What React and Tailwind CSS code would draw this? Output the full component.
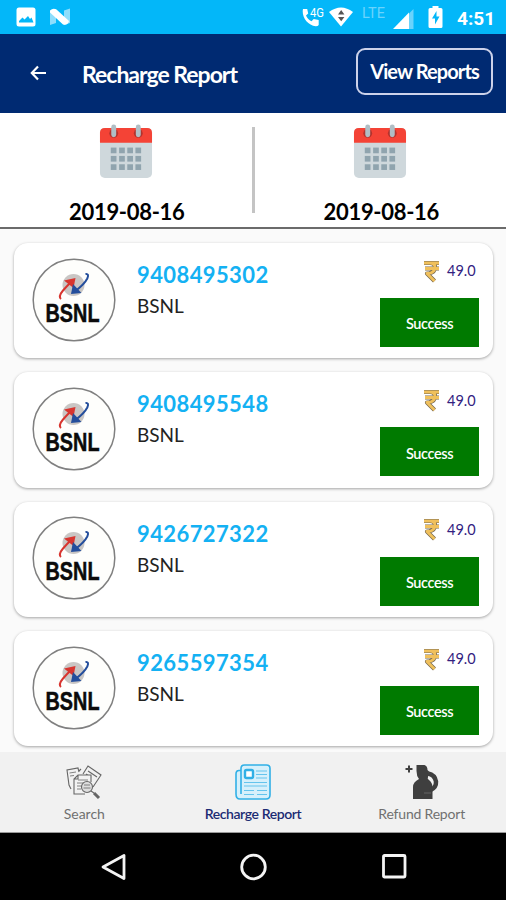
import React from 'react';

const dates = ['2019-08-16', '2019-08-16'];

const recharges = [
  { number: '9408495302', operator: 'BSNL', amount: '49.0', status: 'Success' },
  { number: '9408495548', operator: 'BSNL', amount: '49.0', status: 'Success' },
  { number: '9426727322', operator: 'BSNL', amount: '49.0', status: 'Success' },
  { number: '9265597354', operator: 'BSNL', amount: '49.0', status: 'Success' },
];

function StatusBar() {
  return (
    <div className="flex h-[34px] shrink-0 items-center bg-[#03b7f9] pl-4 pr-3 text-white">
      <svg width="20" height="20" viewBox="0 0 20 20">
        <rect x="0.5" y="0.5" width="19" height="19" rx="2.5" fill="#fff" />
        <path d="M3 15.500 3 14 6.500 10.500l2 2 3.500-3.500 2 3 1.500-1.500 2 5Z" fill="#03b7f9" />
      </svg>
      <svg className="ml-[13px]" width="22" height="18" viewBox="0 0 22 18">
        <path d="M1 3.5 7 1v14l-6 2ZM15 2.500l6-2V15l-6 2Z" fill="#fff" opacity=".55" />
        <path d="M1 2.5Q4-.5 7.500 1.500L20 13q-1 4.500-6 3.500L1 4.500Z" fill="#fff" />
      </svg>
      <div className="grow" />
      <svg width="22" height="20" viewBox="0 0 22 20">
        <path d="M1 2h4.2l1 4.500-2.200 2c1.300 2.800 3 4.400 5.500 5.700l2.200-2.300 5 1.100V18q-1 1.300-3 1.200C6.500 18.500.5 11.500.7 4Z" fill="#fff" />
        <text x="8" y="10" textLength="14" lengthAdjust="spacingAndGlyphs" className="font-['Roboto'] text-[12px]" fill="#fff">4G</text>
      </svg>
      <svg className="ml-[4px]" width="26" height="20" viewBox="0 0 26 20">
        <path d="M1 5Q13-4 25 5L13 19.500Z" fill="#fff" />
        <path d="m10 7.500 3.200-4.500 3.200 4.500ZM10 10h6.400l-3.200 4.300Z" fill="#555" />
      </svg>
      <span className="ml-[8px] mt-[-5px] w-[26px] font-['Roboto'] text-[14.500px] leading-none tracking-[0.1px] text-[#6bd3fc]">LTE</span>
      <svg className="ml-[5px] mt-[4px]" width="21" height="20" viewBox="0 0 21 20">
        <path d="M16 4.500 20.500 0v20H16Z" fill="#6bd3fc" />
        <path d="M0 20 16 3.500V20Z" fill="#fff" />
      </svg>
      <svg className="ml-[14px]" width="15" height="22" viewBox="0 0 15 22">
        <path d="M4.500 2V0h6v2H13q1.500 0 1.500 1.500v17Q14.500 22 13 22H2Q.500 22 .5 20.500v-17Q.5 2 2 2Z" fill="#fff" />
        <path d="M8.500 5 4 12.500h3V18.500L11.500 10.500h-3Z" fill="#03b7f9" />
      </svg>
      <span className="ml-[14px] mt-[3px] w-[37px] whitespace-nowrap font-['Roboto'] text-[19px] font-bold leading-none">4:51</span>
    </div>
  );
}

function Header() {
  return (
    <header className="flex h-[78.500px] shrink-0 items-center bg-[#002a72] text-white">
      <svg className="ml-[30px] mt-[-1px]" width="17" height="16" viewBox="0 0 17 16" fill="none" stroke="#fff" strokeWidth="2.200">
        <path d="M16 8H2M8 1.500 1.800 8 8 14.500" />
      </svg>
      <h1 className="ml-[35px] mt-[2px] whitespace-nowrap text-[23px] font-bold tracking-[-1px]">Recharge Report</h1>
      <button
        type="button"
        className="mb-[4px] ml-auto mr-[13px] h-[47px] w-[137px] whitespace-nowrap rounded-[9px] border-2 border-[#ccd2ea] text-[20px] font-bold tracking-[-0.9px]"
      >
        View Reports
      </button>
    </header>
  );
}

function CalendarIcon() {
  return (
    <svg width="54" height="56" viewBox="0 0 54 56">
      <rect x="0.500" y="4" width="53" height="51" rx="5" fill="#cfd8dc" />
      <path d="M.5 19V9q0-5 5-5h43q5 0 5 5v10Z" fill="#f44336" />
      <circle cx="14.500" cy="9.500" r="4.500" fill="#b3332d" />
      <circle cx="39.500" cy="9.500" r="4.500" fill="#b3332d" />
      <path d="M14.500 3v8M39.500 3v8" stroke="#b0bec5" strokeWidth="5" strokeLinecap="round" />
      {[24, 32.5, 41].map((y) =>
        [11.5, 20, 28.3, 36.6].map((x) => (
          <rect key={`${x}-${y}`} x={x} y={y} width="5.800" height="5.800" fill="#90a4ae" />
        ))
      )}
    </svg>
  );
}

function DateBar() {
  return (
    <div className="flex h-[116.500px] shrink-0 border-b-2 border-[#6b6b6b] bg-white">
      {dates.map((date, i) => (
        <React.Fragment key={i}>
          {i > 0 && <div className="mt-[14.500px] h-[86px] w-[3px] bg-[#c4c4c4]" />}
          <button type="button" className="flex flex-1 flex-col items-center pt-[11.500px]">
            <CalendarIcon />
            <span className="ml-[2px] mt-[18px] whitespace-nowrap text-[22px] font-bold leading-[30px] tracking-[-0.300px] text-black">
              {date}
            </span>
          </button>
        </React.Fragment>
      ))}
    </div>
  );
}

function BsnlLogo() {
  return (
    <svg width="84" height="84" viewBox="0 0 84 84">
      <circle cx="42" cy="42" r="40.800" fill="#fefefc" stroke="#808080" strokeWidth="1.500" />
      <circle cx="41.500" cy="27" r="11" fill="#c9c6c4" />
      <path d="M29 41q-3-2.500 2-8.500 4-4.500 8.500-9" fill="none" stroke="#d8352f" strokeWidth="2" />
      <path d="M32 22.500 43.500 20l-2 10Z" fill="#d8352f" />
      <path d="M53.500 16q4-.5 1.800 4.500Q52.500 26 43.500 33" fill="none" stroke="#244e9c" strokeWidth="2" />
      <path d="m41 26-2 10 10.500-1Z" fill="#244e9c" />
      <text
        x="13.500"
        y="64"
        textLength="54"
        lengthAdjust="spacingAndGlyphs"
        className="font-['Liberation_Sans'] text-[26px] font-bold"
        fill="#0b0b0b"
        stroke="#0b0b0b"
        strokeWidth="0.500"
      >
        BSNL
      </text>
    </svg>
  );
}

function RupeeIcon() {
  return (
    <svg width="17" height="23" viewBox="0 0 17 23" fill="none" strokeLinejoin="round">
      <path d="M1 3h15M2 8.500h14M4 3h3q5 0 5 4.500T6 13.500H4L11.500 21" stroke="#77684f" strokeWidth="4.200" />
      <path d="M1 3h15M2 8.500h14M4 3h3q5 0 5 4.500T6 13.500H4L11.500 21" stroke="#f0c05c" strokeWidth="2.800" />
    </svg>
  );
}

function RechargeCard({ item }) {
  return (
    <article className="flex h-[115.300px] shrink-0 rounded-[14px] bg-white shadow-[0_1px_3px_rgba(0,0,0,0.35)]">
      <div className="ml-[18px] mt-[14.500px]">
        <BsnlLogo />
      </div>
      <div className="ml-[21px] mt-[17px]">
        <h2 className="whitespace-nowrap text-[22px] font-bold leading-[30px] tracking-[0.400px] text-[#14b1f3]">{item.number}</h2>
        <p className="mt-[2px] text-[19px] leading-[28px] text-[#222]">{item.operator}</p>
      </div>
      <div className="ml-auto mr-[14px] mt-[15px] flex flex-col items-end">
        <div className="mr-[3px] flex h-[26px] items-center">
          <RupeeIcon />
          <span className="ml-[7px] w-[29px] whitespace-nowrap text-[14.500px] text-[#32217f]">{item.amount}</span>
        </div>
        <span className="mt-[14px] flex h-[49px] w-[99px] items-center justify-center bg-[#007a00] pt-[3px] text-[14.500px] font-semibold tracking-[-0.4px] text-white">
          {item.status}
        </span>
      </div>
    </article>
  );
}

function SearchDocsIcon() {
  return (
    <svg width="36" height="36" viewBox="0 0 36 36" fill="none" stroke="#666" strokeWidth="1.100">
      <path d="M5 25 3 21 1 6l11-2 1 4M13 7l2-2" />
      <path d="M3.500 9 10 8M4 12l4-.5" strokeWidth=".8" />
      <path d="m17 10 5-8 13 9-8 12M22 7l9 6M20 10l5 3.500" />
      <path d="M19 30H8V15l4-4h13v7M8 15h4v-4" fill="#f2f2f2" />
      <path d="M12 16h10M11 19h7M11 22h5M11 25h4" strokeWidth=".8" />
      <circle cx="21" cy="23" r="5.500" fill="#dedede" />
      <path d="M18 21h6M17.500 24h7" strokeWidth=".8" />
      <path d="m25 27 3 2" />
      <path d="m28 29 5 5" strokeWidth="3" />
    </svg>
  );
}

function NewsIcon() {
  return (
    <svg width="36" height="36" viewBox="0 0 36 36" fill="none" stroke="#31b0e6" strokeWidth="1.600">
      <path d="M6 6.500H4Q1 6.500 1 10v20q0 5 4 5h26q4 0 4-4V4.500Q35 1 31.500 1h-22Q6 1 6 4.500V30" fill="#d6f0fb" />
      <rect x="10" y="6" width="8" height="8" rx="1.500" fill="#fff" strokeWidth="2.400" />
      <path d="M21 7h11M21 10.500h11M21 14h11M9 18.500h23M9 22h23M9 26.500h10M22 26.500h10M9 30.500h10M22 30.500h10" stroke="#64c4ed" strokeWidth="1.200" />
    </svg>
  );
}

function RefundIcon() {
  return (
    <svg width="36" height="36" viewBox="0 0 36 36" fill="#3f3f3f">
      <path d="M5 1.500v7M1.500 5h7" stroke="#3f3f3f" strokeWidth="2" />
      <path d="M12.500 1h8q3 1 3 5l1.500 1.500-1 5.500q-1 2 1 3 3.500 3 3.500 7v12H9V23q0-5 6-8-2.500-3-2.500-8Z" />
      <path d="M24 9.500q7 1.500 8 8 .5 6-6 9" fill="none" stroke="#3f3f3f" strokeWidth="4.500" />
      <path d="M20 29h7" stroke="#777" strokeWidth=".7" />
    </svg>
  );
}

const tabs = [
  { label: 'Search', icon: SearchDocsIcon, labelClass: 'text-[#707070]' },
  { label: 'Recharge Report', icon: NewsIcon, labelClass: 'font-semibold tracking-[-0.4px] text-[#1b2b73]' },
  { label: 'Refund Report', icon: RefundIcon, labelClass: 'tracking-[-0.2px] text-[#707070]' },
];

function BottomTabs() {
  return (
    <nav className="grid h-[81px] shrink-0 grid-cols-3 border-b border-[#999] bg-[#f1f1f1]">
      {tabs.map(({ label, icon: Icon, labelClass }) => (
        <button key={label} type="button" className="flex flex-col items-center pt-[12px]">
          <Icon />
          <span className={`mt-[4px] whitespace-nowrap text-[14px] leading-[20px] ${labelClass}`}>{label}</span>
        </button>
      ))}
    </nav>
  );
}

function AndroidNav() {
  return (
    <div className="flex h-[67px] shrink-0 items-center justify-between bg-black pl-[101px] pr-[99px]">
      <svg width="25" height="28" viewBox="0 0 25 28" fill="none" stroke="#f4f4f4" strokeWidth="2.800" strokeLinejoin="round">
        <path d="M23 2.500v23L2 14Z" />
      </svg>
      <svg width="28" height="28" viewBox="0 0 28 28" fill="none" stroke="#f4f4f4" strokeWidth="2.800">
        <circle cx="13.500" cy="14" r="11.800" />
      </svg>
      <svg width="25" height="25" viewBox="0 0 25 25" fill="none" stroke="#f4f4f4" strokeWidth="2.800">
        <rect x="1.500" y="1.500" width="21.500" height="21.500" rx="1" />
      </svg>
    </div>
  );
}

export default function App() {
  return (
    <div className="flex h-[900px] w-[506px] flex-col overflow-hidden bg-[#fafafa] font-['Lato',sans-serif]">
      <StatusBar />
      <Header />
      <DateBar />
      <main className="flex min-h-0 flex-1 flex-col gap-[14.100px] overflow-hidden pl-[14px] pr-[13px] pt-[14px]">
        {recharges.map((item) => (
          <RechargeCard key={item.number} item={item} />
        ))}
      </main>
      <BottomTabs />
      <AndroidNav />
    </div>
  );
}
